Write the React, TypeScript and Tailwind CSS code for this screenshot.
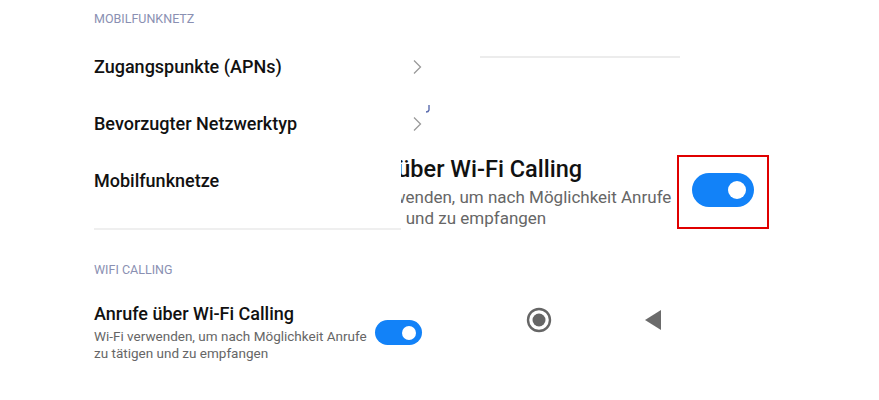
import React from "react";

function Chevron() {
  return (
    <svg width="10" height="16" viewBox="0 0 10 16" className="block">
      <path d="M2 1.5 L8.5 8 L2 14.5" fill="none" stroke="#9a9a9a" strokeWidth="1.3" />
    </svg>
  );
}

function Toggle({ big }: { big?: boolean }) {
  if (big) {
    return (
      <div className="w-[62px] h-[34px] rounded-full bg-[#1282f8] flex items-center justify-end pr-[8px]">
        <div className="w-[18px] h-[18px] rounded-full bg-white" />
      </div>
    );
  }
  return (
    <div className="w-[47px] h-[25px] rounded-full bg-[#1282f8] flex items-center justify-end pr-[6px]">
      <div className="w-[14px] h-[14px] rounded-full bg-white" />
    </div>
  );
}

export default function App() {
  const font = { fontFamily: "Roboto, 'Noto Sans', sans-serif" };
  return (
    <div className="relative w-[879px] h-[400px] bg-white overflow-hidden" style={font}>
      <div className="ml-[94px] w-[328px] flex flex-col">
        <div className="h-[38px] flex items-center text-[12.5px] text-[#8a90b2]">MOBILFUNKNETZ</div>
        <div className="h-[57px] flex items-center justify-between">
          <span className="text-[18px] font-medium text-[#111]">Zugangspunkte (APNs)</span>
          <Chevron />
        </div>
        <div className="h-[57px] flex items-center justify-between">
          <span className="text-[18px] font-medium text-[#111]">Bevorzugter Netzwerktyp</span>
          <Chevron />
        </div>
        <div className="h-[57px] flex items-center justify-between">
          <span className="text-[18px] font-medium text-[#111]">Mobilfunknetze</span>
          <Chevron />
        </div>
        <div className="mt-[19px] h-[2px] bg-[#efefef]" />
        <div className="mt-[32px] h-[16px] flex items-center text-[12.5px] text-[#8a90b2]">WIFI CALLING</div>
        <div className="mt-[25px] flex items-center justify-between">
          <div className="flex flex-col">
            <span className="text-[18px] leading-[21px] font-medium text-[#111]">Anrufe über Wi-Fi Calling</span>
            <span className="mt-[4px] text-[13.5px] leading-[17px] text-[#666]">Wi-Fi verwenden, um nach Möglichkeit Anrufe</span>
            <span className="text-[13.5px] leading-[17px] text-[#666]">zu tätigen und zu empfangen</span>
          </div>
          <Toggle />
        </div>
      </div>

      {/* zoomed overlay */}
      <div className="absolute left-[480px] top-[56px] w-[200px] h-[2px] bg-[#ececec]" />
      <svg className="absolute left-[424px] top-[104px]" width="8" height="10" viewBox="0 0 8 10">
        <path d="M5 1 L5 6 Q4.5 8 2 8" fill="none" stroke="#5b6cae" strokeWidth="1.4" />
      </svg>
      <div className="absolute left-[401px] top-[140px] w-[290px] h-[90px] overflow-hidden bg-white">
        <div className="mt-[15px] flex flex-col whitespace-nowrap">
          <span className="ml-[-80px] text-[23.5px] leading-[28px] font-medium text-[#111]">Anrufe über Wi-Fi Calling</span>
          <span className="ml-[-73px] mt-[4px] text-[17px] leading-[20.5px] text-[#666]">Wi-Fi verwenden, um nach Möglichkeit Anrufe</span>
          <div className="pl-[5px]">
            <div className="overflow-hidden">
              <div className="ml-[-79px] text-[17px] leading-[20.5px] text-[#666]">zu tätigen und zu empfangen</div>
            </div>
          </div>
        </div>
      </div>
      <div className="absolute left-[677px] top-[155px] w-[92px] h-[74px] border-2 border-[#e00000] flex items-center justify-center pb-[4px]">
        <div className="bg-white rounded-full">
          <Toggle big />
        </div>
      </div>

      {/* nav fragments */}
      <svg className="absolute left-[526px] top-[307px]" width="26" height="26" viewBox="0 0 26 26">
        <circle cx="13" cy="13" r="11" fill="none" stroke="#666" strokeWidth="2.4" />
        <circle cx="13" cy="13" r="6.5" fill="#666" />
      </svg>
      <svg className="absolute left-[644px] top-[309px]" width="18" height="22" viewBox="0 0 18 22">
        <path d="M17 1 L17 21 L1 11 Z" fill="#6b6b6b" />
      </svg>
    </div>
  );
}
